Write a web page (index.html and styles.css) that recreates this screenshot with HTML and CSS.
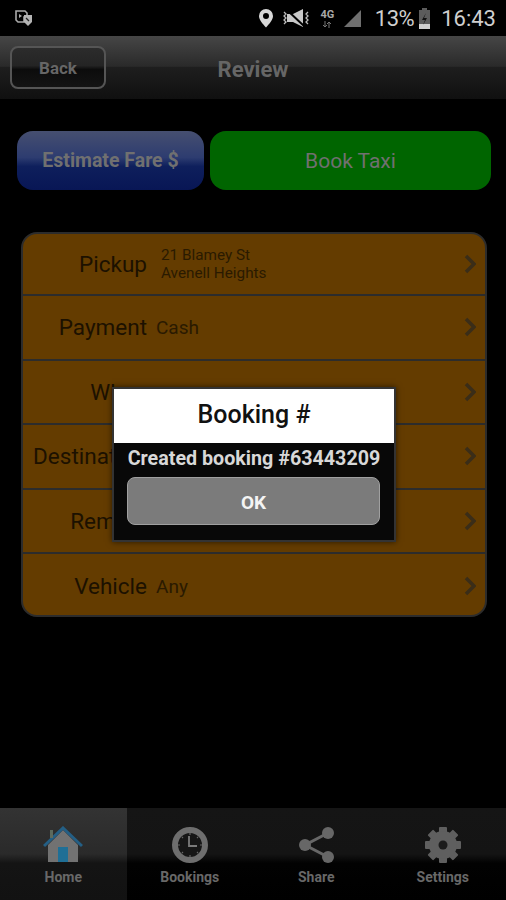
FILE: index.html
```html
<!DOCTYPE html>
<html lang="en">

<head>
    <meta charset="UTF-8">
    <meta name="viewport" content="width=device-width, initial-scale=1.0">
    <title>Review</title>
    <link rel="stylesheet" href="styles.css">
</head>

<body>

    <div class="screen">

        <div class="status-bar">
            <svg class="status-left" width="20" height="18" viewBox="0 0 20 18">
                <path d="M2 2h9l2 2v4h-3v5H4l-2-2z" fill="none" stroke="#aaa" stroke-width="1.6"/>
                <path d="M5 5l3 2-3 2z" fill="#aaa"/>
                <path d="M10 6h8v7l-4 4-4-4z" fill="#b4b4b4"/>
                <path d="M12 9l3 3" stroke="#222" stroke-width="1.2"/>
            </svg>
            <div class="status-right">
                <svg width="16" height="20" viewBox="0 0 16 20">
                    <path fill-rule="evenodd" d="M8 1a7 7 0 0 1 7 7c0 4-4 8-7 11.500C5 16 1 12 1 8a7 7 0 0 1 7-7zm0 4a3 3 0 1 0 0 6 3 3 0 0 0 0-6z" fill="#d8d8d8"/>
                </svg>
                <svg class="mute" width="28" height="20" viewBox="0 0 28 20">
                    <path d="M5 6h6l10-5v18L11 14H5z" fill="#c8c8c8"/>
                    <path d="M6 3l16 15" stroke="#000" stroke-width="2"/>
                    <path d="M2 4l2 2-2 2 2 2-2 2 2 2-2 2M26 4l-2 2 2 2-2 2 2 2-2 2 2 2" fill="none" stroke="#bbb" stroke-width="1.300"/>
                </svg>
                <div class="net">
                    <span class="net-type">4G</span>
                    <svg width="10" height="7" viewBox="0 0 10 7">
                        <path d="M3 0v6M1 4l2 2 2-2M7 7V1M5 3l2-2 2 2" fill="none" stroke="#777" stroke-width="1"/>
                    </svg>
                </div>
                <svg class="signal" width="19" height="19" viewBox="0 0 19 19">
                    <path d="M18 1v17H1z" fill="#6f6f6f"/>
                </svg>
                <span class="status-text battery-text">13%</span>
                <svg class="battery" width="13" height="21" viewBox="0 0 13 21">
                    <path d="M4 0h5v2h3v19H1V2h3z" fill="#5c5c5c"/>
                    <path d="M1 16h11v5H1z" fill="#d0d0d0"/>
                    <path d="M8 5L4 12h3l-2 5 4-7H6z" fill="#111"/>
                </svg>
                <span class="status-text clock">16:43</span>
            </div>
        </div>

        <header class="top-bar">
            <div class="back-btn">Back</div>
            <h1>Review</h1>
        </header>

        <main class="content">
            <div class="actions">
                <div class="action estimate">Estimate Fare $</div>
                <div class="action book">Book Taxi</div>
            </div>

            <ul class="review-list">
                <li>
                    <span class="label">Pickup</span>
                    <span class="value value-small">21 Blamey St<br>Avenell Heights</span>
                    <svg class="chevron" width="12" height="20" viewBox="0 0 12 20"><path d="M2 2l8 8-8 8" /></svg>
                </li>
                <li>
                    <span class="label">Payment</span>
                    <span class="value">Cash</span>
                    <svg class="chevron" width="12" height="20" viewBox="0 0 12 20"><path d="M2 2l8 8-8 8" /></svg>
                </li>
                <li>
                    <span class="label">When</span>
                    <span class="value"></span>
                    <svg class="chevron" width="12" height="20" viewBox="0 0 12 20"><path d="M2 2l8 8-8 8" /></svg>
                </li>
                <li>
                    <span class="label">Destination</span>
                    <span class="value"></span>
                    <svg class="chevron" width="12" height="20" viewBox="0 0 12 20"><path d="M2 2l8 8-8 8" /></svg>
                </li>
                <li>
                    <span class="label">Remark</span>
                    <span class="value"></span>
                    <svg class="chevron" width="12" height="20" viewBox="0 0 12 20"><path d="M2 2l8 8-8 8" /></svg>
                </li>
                <li>
                    <span class="label">Vehicle</span>
                    <span class="value">Any</span>
                    <svg class="chevron" width="12" height="20" viewBox="0 0 12 20"><path d="M2 2l8 8-8 8" /></svg>
                </li>
            </ul>
        </main>

        <nav class="tabs">
            <div class="tab active">
                <svg width="40" height="38" viewBox="0 0 40 38">
                    <path d="M20 4L35 19v17H5V19z" fill="#727272"/>
                    <path d="M1 20L20 2l19 18" fill="none" stroke="#245f85" stroke-width="3"/>
                    <rect x="7" y="4" width="3" height="8" fill="#5d6a5d"/>
                    <rect x="15" y="21" width="10" height="15" fill="#1f6f96"/>
                </svg>
                <span>Home</span>
            </div>
            <div class="tab">
                <svg width="38" height="38" viewBox="0 0 38 38">
                    <circle cx="19" cy="19" r="15" fill="#161616" stroke="#6e6e6e" stroke-width="6"/>
                    <path d="M18 10v10h8" fill="none" stroke="#7a7a7a" stroke-width="1.800"/>
                    <path d="M19 7v2M19 29v2M7 19h2M29 19h2M11 11l1 1M27 11l-1 1M11 27l1-1M27 27l-1-1" stroke="#666" stroke-width="1.200"/>
                </svg>
                <span>Bookings</span>
            </div>
            <div class="tab">
                <svg class="share" width="38" height="38" viewBox="0 0 38 38">
                    <path d="M30 7L7 19l23 12" fill="none" stroke="#676767" stroke-width="3"/>
                    <circle cx="30" cy="7" r="6" fill="#676767"/>
                    <circle cx="7" cy="19" r="6" fill="#676767"/>
                    <circle cx="30" cy="31" r="6" fill="#676767"/>
                </svg>
                <span>Share</span>
            </div>
            <div class="tab">
                <svg width="38" height="38" viewBox="0 0 38 38">
                    <g fill="#5f5f5f">
                        <rect x="15" y="1" width="8" height="36" rx="1"/>
                        <rect x="15" y="1" width="8" height="36" rx="1" transform="rotate(45 19 19)"/>
                        <rect x="15" y="1" width="8" height="36" rx="1" transform="rotate(90 19 19)"/>
                        <rect x="15" y="1" width="8" height="36" rx="1" transform="rotate(135 19 19)"/>
                        <circle cx="19" cy="19" r="14"/>
                    </g>
                    <circle cx="19" cy="19" r="4.500" fill="#1c1c1c"/>
                </svg>
                <span>Settings</span>
            </div>
        </nav>

        <div class="dialog">
            <div class="dialog-title">Booking #</div>
            <p class="dialog-msg">Created booking #63443209</p>
            <div class="dialog-btn">OK</div>
        </div>

    </div>

</body>

</html>
```

FILE: styles.css
```css
* {
    margin: 0;
    padding: 0;
    box-sizing: border-box;
}

html, body {
    background-color: #000;
}

body {
    font-family: Roboto, 'Liberation Sans', sans-serif;
    overflow: hidden;
}

.screen {
    position: relative;
    display: flex;
    flex-direction: column;
    width: 506px;
    height: 900px;
    background-color: #000;
}

/* status bar */
.status-bar {
    display: flex;
    align-items: center;
    justify-content: space-between;
    height: 36px;
    padding: 0 10px 0 14px;
    flex-shrink: 0;
}

.status-right {
    display: flex;
    align-items: center;
}

.mute {
    margin-left: 8px;
}

.net {
    display: flex;
    flex-direction: column;
    align-items: center;
    gap: 1px;
    width: 17px;
    margin-left: 9px;
    line-height: 1;
    color: #a8a8a8;
}

.net-type {
    font-size: 11px;
    font-weight: 700;
}

.signal {
    margin-left: 7px;
}

.status-text {
    font-size: 22px;
    color: #cfcfcf;
}

.battery-text {
    margin-left: 13px;
    letter-spacing: -0.5px;
}

.battery {
    margin-left: 4px;
}

.clock {
    margin-left: 10px;
}

/* top bar */
.top-bar {
    position: relative;
    display: flex;
    align-items: center;
    justify-content: center;
    height: 63px;
    padding-top: 3px;
    flex-shrink: 0;
    background: linear-gradient(#464646 0%, #2a2a2a 48%, #1e1e1e 50%, #101010 100%);
}

.top-bar h1 {
    font-size: 22px;
    font-weight: 700;
    color: #666;
}

.back-btn {
    position: absolute;
    left: 10px;
    top: 10px;
    width: 96px;
    height: 43px;
    border: 2px solid #555;
    border-radius: 8px;
    background: linear-gradient(#2c2c2c 0%, #242424 45%, #0c0c0c 55%, #141414 100%);
    color: #666;
    font-size: 17px;
    font-weight: 700;
    line-height: 40px;
    text-align: center;
}

/* page content */
.content {
    flex: 1;
    padding: 32px 15px 0 17px;
}

.actions {
    display: flex;
    gap: 6px;
    height: 59px;
}

.action {
    display: flex;
    align-items: center;
    justify-content: center;
    border-radius: 16px;
    color: #707070;
}

.estimate {
    width: 187px;
    background: linear-gradient(#464f70 0%, #2d3c70 45%, #0e1f5c 60%, #081655 100%);
    font-size: 19.500px;
    font-weight: 700;
}

.book {
    flex: 1;
    background-color: #006500;
    font-size: 21px;
}

.review-list {
    list-style: none;
    width: 466px;
    height: 385px;
    margin: 42px 0 0 4px;
    border: 2px solid #2c2c2c;
    border-radius: 16px;
    background-color: #643c00;
    overflow: hidden;
}

.review-list li {
    display: flex;
    align-items: center;
    height: 64.500px;
    border-bottom: 2px solid #2c2c2c;
    padding-right: 9px;
}

.review-list li:first-child {
    height: 62px;
}

.review-list li:last-child {
    height: 61px;
    padding-top: 3px;
    border-bottom: none;
}

.label {
    width: 124px;
    flex-shrink: 0;
    font-size: 22.500px;
    color: #1c1100;
    text-align: right;
    white-space: nowrap;
}

.value {
    flex: 1;
    margin-left: 9px;
    font-size: 19px;
    color: #2a1a00;
}

.value-small {
    margin-left: 14px;
    font-size: 15.300px;
    line-height: 18px;
}

.chevron {
    fill: none;
    stroke: #3a2d18;
    stroke-width: 3.500;
}

/* bottom tabs */
.tabs {
    display: flex;
    height: 92px;
    flex-shrink: 0;
    background: linear-gradient(#151515 0%, #141414 50%, #020202 60%, #000 100%);
}

.tab {
    display: flex;
    flex-direction: column;
    align-items: center;
    flex: 1;
    padding-top: 18px;
    font-size: 14px;
    font-weight: 700;
    color: #686868;
}

.tab span {
    margin-top: 5px;
}

.tab.active {
    background: linear-gradient(#333 0%, #2a2a2a 50%, #141414 60%, #121212 100%);
}

.share {
    margin-left: 2px;
}

/* dialog over the list */
.dialog {
    position: absolute;
    left: 112px;
    top: 387px;
    width: 284px;
    height: 155px;
    border: 2px solid #333;
    background-color: #080808;
    box-shadow: 0 0 6px rgba(0, 0, 0, 0.6);
}

.dialog-title {
    height: 54px;
    background-color: #fff;
    color: #111;
    font-size: 25px;
    font-weight: 500;
    line-height: 52px;
    text-align: center;
}

.dialog-msg {
    margin-top: 4px;
    color: #d8d8d8;
    font-size: 19.700px;
    font-weight: 700;
    line-height: 24px;
    text-align: center;
    white-space: nowrap;
}

.dialog-btn {
    width: 253px;
    height: 48px;
    margin: 6px 0 0 13px;
    border: 1px solid #a0a0a0;
    border-radius: 8px;
    background-color: #7b7b7b;
    color: #f4f4f4;
    font-size: 19px;
    font-weight: 700;
    line-height: 50px;
    text-align: center;
}
```
